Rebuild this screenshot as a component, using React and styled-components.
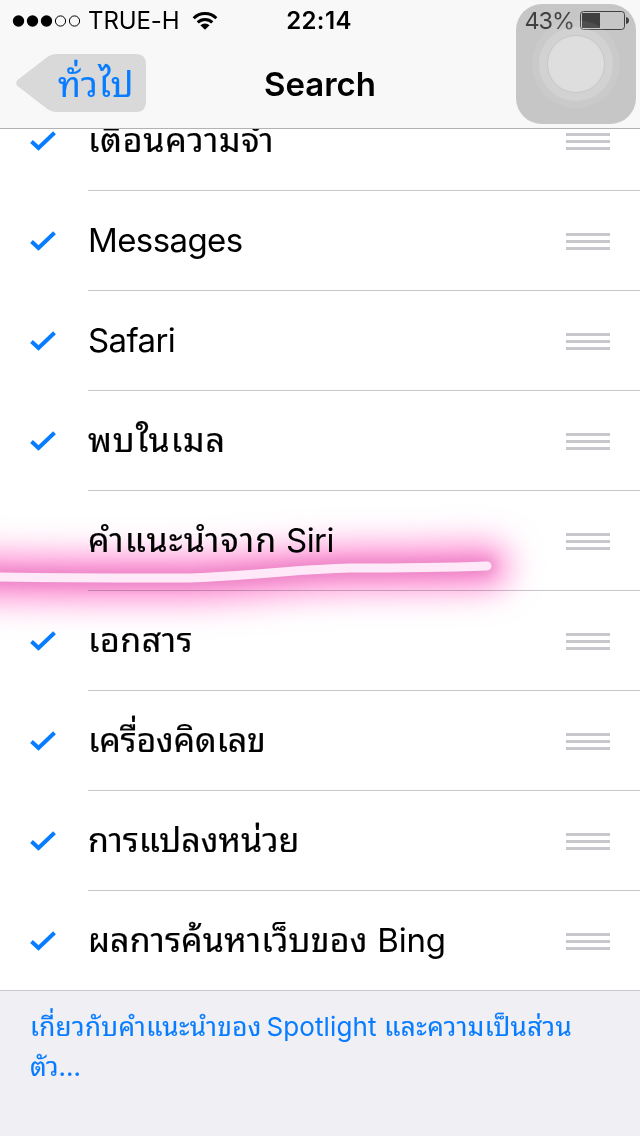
import React from 'react';
import styled, { createGlobalStyle } from 'styled-components';

const GlobalStyle = createGlobalStyle`
  * {
    box-sizing: border-box;
  }
  body {
    margin: 0;
    background: #efeff4;
    font-family: Inter, 'Noto Sans Thai Looped', Loma, Garuda, Waree, Umpush, 'Noto Sans Thai',
      'Noto Sans', sans-serif;
    color: #000;
  }
`;

const Screen = styled.div`
  position: relative;
  width: 640px;
  height: 1136px;
  overflow: hidden;
  background: #efeff4;
`;

const Header = styled.header`
  position: relative;
  z-index: 1;
  height: 129px;
  background: #f8f8f8;
  border-bottom: 1px solid #b2b2b2;
`;

const StatusBar = styled.div`
  display: grid;
  grid-template-columns: 1fr auto 1fr;
  align-items: center;
  height: 41px;
  padding: 0 11px 0 12px;
  font-size: 24px;
  line-height: 41px;
`;

const StatusGroup = styled.div`
  display: flex;
  align-items: center;
  justify-content: ${props => (props.$end ? 'flex-end' : 'flex-start')};
`;

const Signal = styled.svg`
  margin-right: 7px;
`;

const Carrier = styled.span`
  margin-right: 12px;
  letter-spacing: -0.1px;
`;

const Time = styled.span`
  margin-right: 3px;
  font-weight: 600;
  letter-spacing: 0.4px;
`;

const Percent = styled.span`
  margin-right: 6px;
  font-size: 23.5px;
  letter-spacing: -1.1px;
`;

const NavBar = styled.nav`
  display: grid;
  grid-template-columns: 1fr auto 1fr;
  align-items: center;
  height: 87px;
  padding: 0 16px;
`;

const BackButton = styled.button`
  position: relative;
  width: 130px;
  height: 58px;
  margin-top: -3px;
  padding: 0 0 0 42px;
  border: 0;
  background: none;
  color: #087cff;
  font-family: inherit;
  font-size: 35px;
  line-height: 58px;
  text-align: left;
  white-space: nowrap;
`;

const BackShape = styled.svg`
  position: absolute;
  top: 0;
  left: 0;
`;

const BackLabel = styled.span`
  position: relative;
  top: 1px;
  letter-spacing: 0.6px;
  -webkit-text-stroke: 0.15px currentColor;
`;

const Title = styled.h1`
  margin: 0;
  font-size: 33px;
  font-weight: 600;
  line-height: 87px;
`;

const AssistiveTouch = styled.svg`
  position: absolute;
  z-index: 2;
  top: 4px;
  left: 516px;
`;

const List = styled.ul`
  margin: -38px 0 0;
  padding: 0;
  list-style: none;
  background: #fff;
  border-bottom: 1px solid #c8c7cc;
`;

const Row = styled.li`
  display: flex;
  height: 100px;
  padding-left: 30px;

  &:last-child {
    height: 99px;
  }
`;

const CheckCell = styled.div`
  display: flex;
  align-items: center;
  width: 58px;
`;

const RowBody = styled.div`
  display: flex;
  flex: 1;
  align-items: center;
  justify-content: space-between;
  padding-right: 30px;
  border-bottom: 1px solid #c8c7cc;

  ${Row}:last-child & {
    border-bottom: 0;
  }
`;

const Label = styled.span`
  padding-bottom: 1px;
  font-size: 34px;
  line-height: 50px;
  white-space: pre;
  letter-spacing: ${props => props.$spacing || 0}px;
  -webkit-text-stroke: 0.2px currentColor;
`;

const Latin = styled.span`
  margin-left: ${props => props.$offset || 0}px;
  font-size: 33px;
  letter-spacing: ${props => props.$spacing ?? -0.6}px;
  -webkit-text-stroke: 0;
`;

const Grip = styled.span`
  display: flex;
  align-items: center;
  width: 44px;
  height: 17px;
  margin-top: 2px;
  border-top: 3px solid #c7c7cc;
  border-bottom: 3px solid #c7c7cc;

  &::before {
    content: '';
    width: 100%;
    height: 3px;
    background: #c7c7cc;
  }
`;

const Footer = styled.p`
  margin: 0;
  padding: 16px 30px;
  color: #087cff;
  font-size: 26px;
  line-height: 40px;
  white-space: nowrap;
`;

const FooterLine = styled.span`
  display: block;
  letter-spacing: ${props => props.$spacing || 0}px;
  -webkit-text-stroke: 0.1px currentColor;
`;

const FooterLatin = styled.span`
  margin-left: -3px;
  letter-spacing: 0.1px;
  -webkit-text-stroke: 0;
`;

const Marker = styled.svg`
  position: absolute;
  z-index: 2;
  top: 480px;
  left: 0;
  pointer-events: none;
  mix-blend-mode: ${props => (props.$glow ? 'multiply' : 'normal')};
`;

const rows = [
  { thai: 'เตือนความจำ', spacing: 0.75, checked: true },
  { latin: 'Messages', checked: true },
  { latin: 'Safari', checked: true },
  { thai: 'พบในเมล', spacing: 0.9, checked: true },
  { thai: 'คำแนะนำจาก ', latin: 'Siri', spacing: 1.2, offset: -2, checked: false },
  { thai: 'เอกสาร', spacing: 0.5, checked: true },
  { thai: 'เครื่องคิดเลข', spacing: -0.2, checked: true },
  { thai: 'การแปลงหน่วย', spacing: 0, checked: true },
  { thai: 'ผลการค้นหาเว็บของ ', latin: 'Bing', spacing: 0.15, latinSpacing: -0.2, checked: true },
];

const strokePath =
  'M-30 96 L0 97 C60 98 130 98 190 98 C250 96 300 89 350 88 C400 88 430 88 487 86';

function Check() {
  return (
    <svg width="26" height="20" viewBox="0 0 26 20">
      <path d="M1.5 10.5 L8.5 17 L24.5 1.8" fill="none" stroke="#087cff" strokeWidth="4" />
    </svg>
  );
}

function SignalDots() {
  return (
    <Signal width="69" height="12" viewBox="0 0 69 12">
      {[0, 1, 2].map(i => (
        <circle key={i} cx={6.5 + i * 14} cy="6" r="5.7" />
      ))}
      {[3, 4].map(i => (
        <circle key={i} cx={6.5 + i * 14} cy="6" r="5.1" fill="none" stroke="#000" strokeWidth="1" />
      ))}
    </Signal>
  );
}

function Wifi() {
  return (
    <svg width="26" height="20" viewBox="0 0 26 20">
      <g fill="none" stroke="#000" strokeWidth="3">
        <path d="M1.7 7.2 A16 16 0 0 1 24.3 7.2" />
        <path d="M5.7 11.4 A10.4 10.4 0 0 1 20.3 11.4" />
      </g>
      <path d="M13 18.8 L8.4 14.3 A6.6 6.6 0 0 1 17.6 14.3 Z" />
    </svg>
  );
}

function Battery() {
  return (
    <svg width="49" height="19" viewBox="0 0 49 19">
      <rect x="0.5" y="0.5" width="44" height="18" rx="3" fill="none" stroke="#000" />
      <rect x="2" y="2" width="18" height="15" />
      <path d="M46 6 Q49 6.5 49 9.5 Q49 12.5 46 13 Z" />
    </svg>
  );
}

export default function App() {
  return (
    <Screen>
      <GlobalStyle />
      <Header>
        <StatusBar>
          <StatusGroup>
            <SignalDots />
            <Carrier>TRUE-H</Carrier>
            <Wifi />
          </StatusGroup>
          <Time>22:14</Time>
          <StatusGroup $end>
            <Percent>43%</Percent>
            <Battery />
          </StatusGroup>
        </StatusBar>
        <NavBar>
          <BackButton>
            <BackShape width="130" height="58" viewBox="0 0 130 58">
              <path
                d="M1.5 26 L30 4 Q35 0 41 0 H120 Q130 0 130 10 V48 Q130 58 120 58 H41 Q35 58 30 54 L1.5 32 Q-1 29 1.5 26 Z"
                fill="#d9d9da"
              />
            </BackShape>
            <BackLabel>ทั่วไป</BackLabel>
          </BackButton>
          <Title>Search</Title>
        </NavBar>
      </Header>
      <List>
        {rows.map(row => (
          <Row key={row.thai || row.latin}>
            <CheckCell>{row.checked && <Check />}</CheckCell>
            <RowBody>
              <Label $spacing={row.spacing}>
                {row.thai}
                {row.latin && (
                  <Latin $offset={row.offset} $spacing={row.latinSpacing}>
                    {row.latin}
                  </Latin>
                )}
              </Label>
              <Grip />
            </RowBody>
          </Row>
        ))}
      </List>
      <Footer>
        <FooterLine $spacing={0.42}>
          เกี่ยวกับคำแนะนำของ <FooterLatin>Spotlight</FooterLatin> และความเป็นส่วน
        </FooterLine>
        <FooterLine>ตัว...</FooterLine>
      </Footer>
      <Marker $glow width="640" height="180" viewBox="0 0 640 180">
        <defs>
          <filter id="wide" filterUnits="userSpaceOnUse" x="-80" y="-40" width="720" height="260">
            <feGaussianBlur stdDeviation="16" />
          </filter>
          <filter id="tight" filterUnits="userSpaceOnUse" x="-80" y="-40" width="720" height="260">
            <feGaussianBlur stdDeviation="7" />
          </filter>
        </defs>
        <g fill="none" strokeLinecap="round">
          <path d={strokePath} stroke="#ff8ed4" strokeWidth="46" filter="url(#wide)" />
          <path d={strokePath} stroke="#dc74b8" strokeWidth="16" opacity="0.65" filter="url(#tight)" />
        </g>
      </Marker>
      <Marker width="640" height="180" viewBox="0 0 640 180">
        <path d={strokePath} fill="none" stroke="#ffe9f8" strokeWidth="9" strokeLinecap="round" />
      </Marker>
      <AssistiveTouch width="120" height="120" viewBox="0 0 120 120">
        <rect width="120" height="120" rx="26" fill="#8b8b8b" fillOpacity="0.46" />
        <circle cx="60" cy="60" r="44" fill="#fff" fillOpacity="0.08" />
        <circle cx="60" cy="60" r="37" fill="#fff" fillOpacity="0.16" />
        <circle cx="60" cy="60" r="28.5" fill="#dedede" stroke="#c8c8c8" />
      </AssistiveTouch>
    </Screen>
  );
}
